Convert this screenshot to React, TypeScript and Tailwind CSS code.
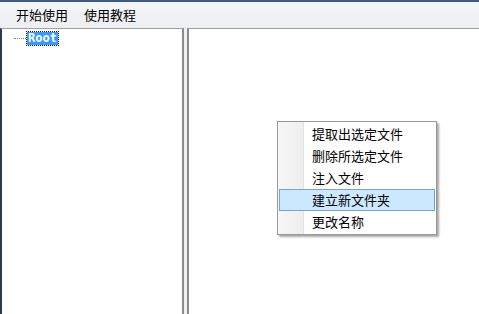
export default function App() {
  const items = ['提取出选定文件', '删除所选定文件', '注入文件', '建立新文件夹', '更改名称'];
  const cjk = { fontFamily: '"Microsoft YaHei", "Noto Sans CJK SC", sans-serif' };

  return (
    <div className="relative w-[479px] h-[314px] overflow-hidden bg-[#f0f0f0] border-t-2 border-[#3b5a8a]" style={cjk}>
      {/* menu bar */}
      <div className="flex h-[26px] items-center bg-gradient-to-b from-[#f5f6f7] to-[#eceef2] text-[13px] text-black">
        <span className="ml-[16px]">开始使用</span>
        <span className="ml-[16px]">使用教程</span>
      </div>

      {/* panels */}
      <div className="flex h-[286px]">
        <div className="w-[184px] border-l-2 border-l-[#2b3a55] border-t border-t-[#a0a0a0] border-r-2 border-r-[#8c8c8c] bg-white">
          <div className="flex items-center pt-[3px] pl-[12px]">
            <span className="w-[12px] border-t border-dotted border-[#808080]" />
            <span className="ml-px h-[13px] px-[1px] leading-[12px] text-[12px] font-bold text-white bg-[#3399ff] outline outline-1 outline-dotted outline-[#1a1a1a]" style={{ fontFamily: '"DejaVu Sans Mono", monospace' }}>
              Root
            </span>
          </div>
        </div>
        <div className="w-[3px]" />
        <div className="flex-1 border-l-2 border-l-[#8c8c8c] border-t border-t-[#a0a0a0] bg-white" />
      </div>

      {/* context menu */}
      <div className="absolute left-[277px] top-[119px] w-[160px] h-[114px] border border-[#979797] bg-white shadow-[2px_2px_2px_rgba(0,0,0,0.35)]">
        <div className="absolute left-0 top-0 bottom-0 w-[26px] bg-gradient-to-r from-[#f7f7f7] to-[#eeeeee] border-r border-[#e2e3e3]" />
        <div className="relative pt-[1px] px-[1px]">
          {items.map((t, i) => (
            <div
              key={t}
              className={
                'h-[22px] flex items-center pl-[32px] text-[13px] text-black ' +
                (i === 3 ? 'bg-[#cce8ff] border border-[#7da2ce]' : 'border border-transparent')
              }
            >
              {t}
            </div>
          ))}
        </div>
      </div>
    </div>
  );
}
